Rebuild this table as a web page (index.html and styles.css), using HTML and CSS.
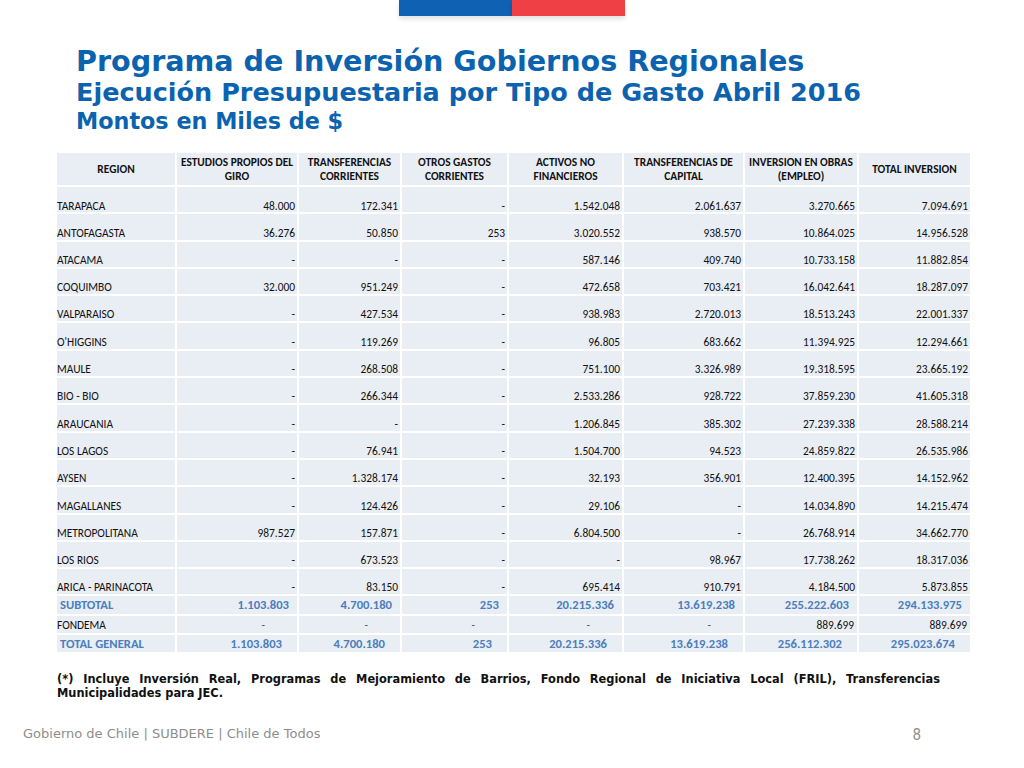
FILE: index.html
```html
<!DOCTYPE html>
<html lang="es">
<head>
<meta charset="utf-8">
<title>Programa de Inversión Gobiernos Regionales</title>
<link rel="stylesheet" href="styles.css">
</head>
<body>
<div class="slide">
  <div class="flagbar"><span class="blue"></span><span class="red"></span></div>
  <header class="titles">
    <h1>Programa de Inversión Gobiernos Regionales</h1>
    <h2>Ejecución Presupuestaria por Tipo de Gasto Abril 2016</h2>
    <h3>Montos en Miles de $</h3>
  </header>
  <table class="data">
    <colgroup>
      <col class="c1"><col class="c2"><col class="c3"><col class="c4"><col class="c5"><col class="c6"><col class="c7"><col class="c8">
    </colgroup>
    <thead>
      <tr>
        <th>REGION</th>
        <th>ESTUDIOS PROPIOS DEL GIRO</th>
        <th>TRANSFERENCIAS CORRIENTES</th>
        <th>OTROS GASTOS CORRIENTES</th>
        <th>ACTIVOS NO FINANCIEROS</th>
        <th>TRANSFERENCIAS DE CAPITAL</th>
        <th>INVERSION EN OBRAS (EMPLEO)</th>
        <th>TOTAL INVERSION</th>
      </tr>
    </thead>
    <tbody>
      <tr><td>TARAPACA</td><td>48.000</td><td>172.341</td><td>-</td><td>1.542.048</td><td>2.061.637</td><td>3.270.665</td><td>7.094.691</td></tr>
      <tr><td>ANTOFAGASTA</td><td>36.276</td><td>50.850</td><td>253</td><td>3.020.552</td><td>938.570</td><td>10.864.025</td><td>14.956.528</td></tr>
      <tr><td>ATACAMA</td><td>-</td><td>-</td><td>-</td><td>587.146</td><td>409.740</td><td>10.733.158</td><td>11.882.854</td></tr>
      <tr><td>COQUIMBO</td><td>32.000</td><td>951.249</td><td>-</td><td>472.658</td><td>703.421</td><td>16.042.641</td><td>18.287.097</td></tr>
      <tr><td>VALPARAISO</td><td>-</td><td>427.534</td><td>-</td><td>938.983</td><td>2.720.013</td><td>18.513.243</td><td>22.001.337</td></tr>
      <tr><td>O'HIGGINS</td><td>-</td><td>119.269</td><td>-</td><td>96.805</td><td>683.662</td><td>11.394.925</td><td>12.294.661</td></tr>
      <tr><td>MAULE</td><td>-</td><td>268.508</td><td>-</td><td>751.100</td><td>3.326.989</td><td>19.318.595</td><td>23.665.192</td></tr>
      <tr><td>BIO - BIO</td><td>-</td><td>266.344</td><td>-</td><td>2.533.286</td><td>928.722</td><td>37.859.230</td><td>41.605.318</td></tr>
      <tr><td>ARAUCANIA</td><td>-</td><td>-</td><td>-</td><td>1.206.845</td><td>385.302</td><td>27.239.338</td><td>28.588.214</td></tr>
      <tr><td>LOS LAGOS</td><td>-</td><td>76.941</td><td>-</td><td>1.504.700</td><td>94.523</td><td>24.859.822</td><td>26.535.986</td></tr>
      <tr><td>AYSEN</td><td>-</td><td>1.328.174</td><td>-</td><td>32.193</td><td>356.901</td><td>12.400.395</td><td>14.152.962</td></tr>
      <tr><td>MAGALLANES</td><td>-</td><td>124.426</td><td>-</td><td>29.106</td><td>-</td><td>14.034.890</td><td>14.215.474</td></tr>
      <tr><td>METROPOLITANA</td><td>987.527</td><td>157.871</td><td>-</td><td>6.804.500</td><td>-</td><td>26.768.914</td><td>34.662.770</td></tr>
      <tr><td>LOS RIOS</td><td>-</td><td>673.523</td><td>-</td><td>-</td><td>98.967</td><td>17.738.262</td><td>18.317.036</td></tr>
      <tr><td>ARICA - PARINACOTA</td><td>-</td><td>83.150</td><td>-</td><td>695.414</td><td>910.791</td><td>4.184.500</td><td>5.873.855</td></tr>
    </tbody>
    <tfoot>
      <tr class="subtotal"><td>SUBTOTAL</td><td>1.103.803</td><td>4.700.180</td><td>253</td><td>20.215.336</td><td>13.619.238</td><td>255.222.603</td><td>294.133.975</td></tr>
      <tr class="fondema"><td>FONDEMA</td><td class="dash">-</td><td class="dash">-</td><td class="dash">-</td><td class="dash">-</td><td class="dash">-</td><td>889.699</td><td>889.699</td></tr>
      <tr class="total"><td>TOTAL GENERAL</td><td>1.103.803</td><td>4.700.180</td><td>253</td><td>20.215.336</td><td>13.619.238</td><td>256.112.302</td><td>295.023.674</td></tr>
    </tfoot>
  </table>
  <p class="note"><span class="line1">(*) Incluye Inversión Real, Programas de Mejoramiento de Barrios, Fondo Regional de Iniciativa Local (FRIL), Transferencias</span> Municipalidades para JEC.</p>
  <footer class="foot">
    <span class="brand">Gobierno de Chile | SUBDERE | Chile de Todos</span>
    <span class="pageno">8</span>
  </footer>
</div>
</body>
</html>
```

FILE: styles.css
```css
* { box-sizing: border-box; }
html, body { margin: 0; padding: 0; background: #fff; }
.slide {
  width: 1024px;
  height: 768px;
  position: relative;
  overflow: hidden;
  display: flex;
  flex-direction: column;
}
.flagbar {
  display: flex;
  justify-content: center;
  height: 16px;
}
.flagbar span {
  width: 113px;
  height: 16px;
  box-shadow: 0 3px 5px rgba(0,0,0,0.12);
}
.flagbar .blue { background: #0f61b3; }
.flagbar .red { background: #ef4045; }

.titles {
  padding-left: 76px;
  margin-top: 28px;
  color: #0b63b0;
  font-family: "DejaVu Sans", sans-serif;
  font-weight: bold;
}
.titles h1, .titles h2, .titles h3 { margin: 0; font-weight: bold; white-space: nowrap; }
.titles h1 { font-size: 28.6px; line-height: 34px; }
.titles h2 { font-size: 25.5px; line-height: 29px; }
.titles h3 { font-size: 22.3px; line-height: 28px; }

.data {
  margin: 16px 0 0 55px;
  width: 915px;
  border-collapse: collapse;
  table-layout: fixed;
  font-family: Carlito, Lato, "Liberation Sans", sans-serif;
  font-size: 11.4px;
  color: #111;
}
.c1 { width: 120px; } .c2 { width: 122px; } .c3 { width: 103px; } .c4 { width: 107px; }
.c5 { width: 115px; } .c6 { width: 121px; } .c7 { width: 114px; } .c8 { width: 113px; }
.data th, .data td {
  background: #e9edf4;
  border: 2px solid #fff;
  padding: 0 2px;
  white-space: nowrap;
}
.data th {
  height: 34px;
  font-weight: bold;
  font-size: 11.4px;
  line-height: 14px;
  text-align: center;
  vertical-align: middle;
  white-space: normal;
}
.data tbody td {
  height: 27.3px;
  vertical-align: bottom;
  text-align: right;
  line-height: 13px;
  padding-bottom: 0;
}
.data tbody tr:first-child td { padding-bottom: 0; line-height: 12px; }
.data tbody td:first-child { text-align: left; padding-left: 0; }
.data tfoot td {
  text-align: right;
  vertical-align: middle;
  line-height: 14px;
}
.data tfoot td:first-child { text-align: left; }
.subtotal td, .total td {
  color: #4a7ebc;
  font-weight: bold;
  font-size: 12.6px;
}
.subtotal td { height: 20px; padding-right: 8px; }
.subtotal td:first-child { padding-left: 3px; }
.total td { height: 19px; padding-right: 15px; }
.total td:first-child { padding-left: 3px; }
.fondema td { height: 19px; padding-right: 3px; }
.fondema td:first-child { padding-left: 0; }
.fondema td.dash { padding-right: 32px; color: #555; }

.note {
  margin: 18px 0 0 57px;
  width: 883px;
  font-family: "DejaVu Sans", sans-serif;
  font-weight: bold;
  font-size: 11.4px;
  line-height: 14px;
  text-align: justify;
  color: #111;
}
.note .line1 {
  display: block;
  text-align: justify;
  text-align-last: justify;
}
.foot {
  margin-top: auto;
  margin-bottom: 24px;
  display: flex;
  justify-content: space-between;
  padding: 0 103px 0 23px;
  font-family: "DejaVu Sans", sans-serif;
  color: #8e8e8e;
}
.brand { font-size: 13px; }
.pageno { font-family: "DejaVu Sans Condensed", "DejaVu Sans", sans-serif; font-stretch: condensed; font-size: 15px; }
```
